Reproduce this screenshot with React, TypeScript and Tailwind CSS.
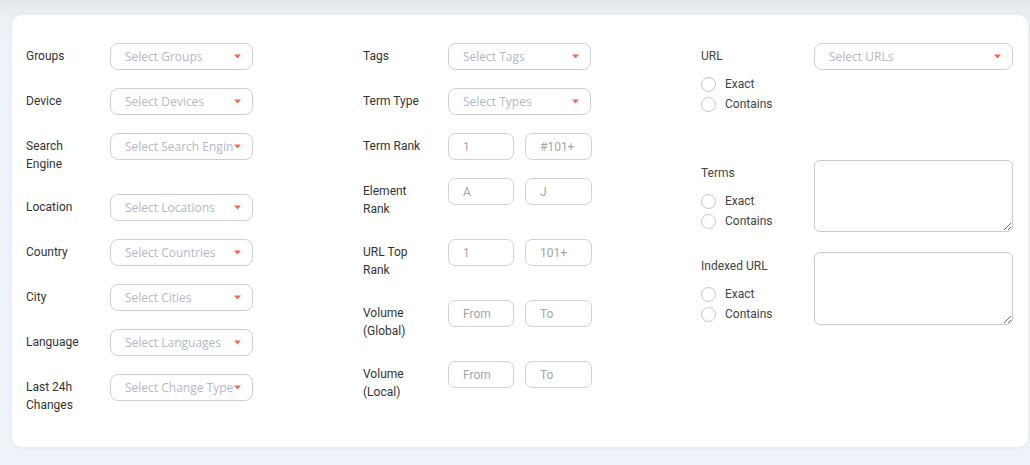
import React from "react";

const labelCls = "text-[12px] leading-[18px] text-[#333] pt-[4px] shrink-0";

function Arrow() {
  return (
    <svg width="7" height="5" viewBox="0 0 7 5" className="shrink-0">
      <path d="M0 0.5 L7 0.5 L3.5 4.5 Z" fill="#f26a4b" />
    </svg>
  );
}

function Select({ text, w = "w-[143px]" }: { text: string; w?: string }) {
  return (
    <div
      className={`${w} h-[27px] shrink-0 rounded-[8px] border border-[#cfcfd3] flex items-center pl-[14px] pr-[11px]`}
    >
      <div
        className="flex-1 overflow-hidden whitespace-nowrap text-[12px] text-[#b3b8c6]"
        style={{ fontFamily: '"Open Sans", sans-serif' }}
      >
        {text}
      </div>
      <Arrow />
    </div>
  );
}

function Box({ text, w }: { text: string; w: string }) {
  return (
    <div
      className={`${w} h-[27px] rounded-[7px] border border-[#d2d2d2] flex items-center pl-[14px] text-[12px] text-[#a6a6a6]`}
    >
      {text}
    </div>
  );
}

function Pair({ a, b }: { a: string; b: string }) {
  return (
    <div className="flex gap-[11px]">
      <Box text={a} w="w-[66px]" />
      <Box text={b} w="w-[67px]" />
    </div>
  );
}

function Row({
  label,
  tall,
  lw,
  children,
}: {
  label: React.ReactNode;
  tall?: boolean;
  lw: string;
  children: React.ReactNode;
}) {
  return (
    <div className={`flex items-start ${tall ? "h-[43px]" : "h-[27px]"}`}>
      <div className={`${labelCls} ${lw}`}>{label}</div>
      {children}
    </div>
  );
}

function Radio({ text }: { text: string }) {
  return (
    <div className="flex items-center h-[20px]">
      <div className="w-[15px] h-[15px] rounded-full border border-[#c4c4c4] bg-white" />
      <span className="ml-[9px] text-[12px] text-[#444]">{text}</span>
    </div>
  );
}

export default function App() {
  return (
    <div
      className="w-[1030px] min-h-[465px] pt-[15px] pl-[12px] pr-[2px] pb-[18px] bg-[linear-gradient(to_bottom,#e4e7eb_0px,#eceff4_15px,#eff2f8_40px)]"
      style={{ fontFamily: "Roboto, sans-serif" }}
    >
      <div className="h-[432px] rounded-[10px] bg-white shadow-[0_0_6px_rgba(60,70,100,0.05)] flex pt-[28px] pl-[14px] pr-[15px]">
        {/* Column 1 */}
        <div className="w-[337px] shrink-0 flex flex-col gap-[18px]">
          <Row label="Groups" lw="w-[84px]">
            <Select text="Select Groups" />
          </Row>
          <Row label="Device" lw="w-[84px]">
            <Select text="Select Devices" />
          </Row>
          <Row label={<>Search<br />Engine</>} tall lw="w-[84px]">
            <Select text="Select Search Engines" />
          </Row>
          <Row label="Location" lw="w-[84px]">
            <Select text="Select Locations" />
          </Row>
          <Row label="Country" lw="w-[84px]">
            <Select text="Select Countries" />
          </Row>
          <Row label="City" lw="w-[84px]">
            <Select text="Select Cities" />
          </Row>
          <Row label="Language" lw="w-[84px]">
            <Select text="Select Languages" />
          </Row>
          <Row label={<>Last 24h<br />Changes</>} tall lw="w-[84px]">
            <Select text="Select Change Types" />
          </Row>
        </div>

        {/* Column 2 */}
        <div className="w-[338px] shrink-0 flex flex-col gap-[18px]">
          <Row label="Tags" lw="w-[85px]">
            <Select text="Select Tags" />
          </Row>
          <Row label="Term Type" lw="w-[85px]">
            <Select text="Select Types" />
          </Row>
          <Row label="Term Rank" lw="w-[85px]">
            <Pair a="1" b="#101+" />
          </Row>
          <Row label={<>Element<br />Rank</>} tall lw="w-[85px]">
            <Pair a="A" b="J" />
          </Row>
          <Row label={<>URL Top<br />Rank</>} tall lw="w-[85px]">
            <Pair a="1" b="101+" />
          </Row>
          <Row label={<>Volume<br />(Global)</>} tall lw="w-[85px]">
            <Pair a="From" b="To" />
          </Row>
          <Row label={<>Volume<br />(Local)</>} tall lw="w-[85px]">
            <Pair a="From" b="To" />
          </Row>
        </div>

        {/* Column 3 */}
        <div className="flex-1 flex flex-col">
          <div className="flex items-start h-[70px]">
            <div className="w-[113px] shrink-0">
              <div className="text-[12px] leading-[18px] text-[#444] pt-[4px]">URL</div>
              <div className="mt-[9px]">
                <Radio text="Exact" />
                <Radio text="Contains" />
              </div>
            </div>
            <Select text="Select URLs" w="w-[199px]" />
          </div>

          <div className="flex items-start mt-[47px] h-[72px]">
            <div className="w-[113px] shrink-0">
              <div className="text-[12px] leading-[18px] text-[#444] pt-[4px]">Terms</div>
              <div className="mt-[9px]">
                <Radio text="Exact" />
                <Radio text="Contains" />
              </div>
            </div>
            <textarea className="w-[199px] h-[72px] rounded-[6px] border border-[#cacaca] outline-none bg-white" />
          </div>

          <div className="flex items-start mt-[20px]">
            <div className="w-[113px] shrink-0">
              <div className="text-[12px] leading-[18px] text-[#444] pt-[5px]">Indexed URL</div>
              <div className="mt-[9px]">
                <Radio text="Exact" />
                <Radio text="Contains" />
              </div>
            </div>
            <textarea className="w-[199px] h-[73px] rounded-[6px] border border-[#cacaca] outline-none bg-white" />
          </div>
        </div>
      </div>
    </div>
  );
}
